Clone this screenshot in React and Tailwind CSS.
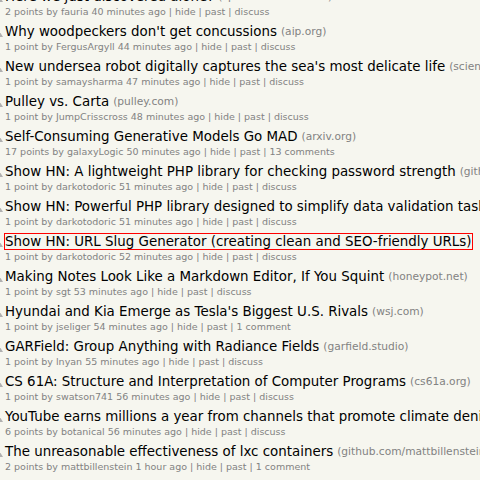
import React from "react";

const stories = [
  {
    title: "Here we just discovered alone?",
    site: "spectatorctech.com",
    sub: "2 points by fauria 40 minutes ago",
    end: "discuss",
  },
  {
    title: "Why woodpeckers don't get concussions",
    site: "aip.org",
    sub: "1 point by FergusArgyll 44 minutes ago",
    end: "discuss",
  },
  {
    title: "New undersea robot digitally captures the sea's most delicate life",
    site: "science.org",
    sub: "1 point by samaysharma 47 minutes ago",
    end: "discuss",
  },
  {
    title: "Pulley vs. Carta",
    site: "pulley.com",
    sub: "1 point by JumpCrisscross 48 minutes ago",
    end: "discuss",
  },
  {
    title: "Self-Consuming Generative Models Go MAD",
    site: "arxiv.org",
    sub: "17 points by galaxyLogic 50 minutes ago",
    end: "13 comments",
  },
  {
    title: "Show HN: A lightweight PHP library for checking password strength",
    site: "github.com/darkotodoric",
    sub: "1 point by darkotodoric 51 minutes ago",
    end: "discuss",
  },
  {
    title: "Show HN: Powerful PHP library designed to simplify data validation tasks",
    site: "github.com/darkotodoric",
    sub: "1 point by darkotodoric 51 minutes ago",
    end: "discuss",
  },
  {
    title: "Show HN: URL Slug Generator (creating clean and SEO-friendly URLs)",
    site: "",
    sub: "1 point by darkotodoric 52 minutes ago",
    end: "discuss",
    focused: true,
  },
  {
    title: "Making Notes Look Like a Markdown Editor, If You Squint",
    site: "honeypot.net",
    sub: "1 point by sgt 53 minutes ago",
    end: "discuss",
  },
  {
    title: "Hyundai and Kia Emerge as Tesla's Biggest U.S. Rivals",
    site: "wsj.com",
    sub: "1 point by jseliger 54 minutes ago",
    end: "1 comment",
  },
  {
    title: "GARField: Group Anything with Radiance Fields",
    site: "garfield.studio",
    sub: "1 point by lnyan 55 minutes ago",
    end: "discuss",
  },
  {
    title: "CS 61A: Structure and Interpretation of Computer Programs",
    site: "cs61a.org",
    sub: "1 point by swatson741 56 minutes ago",
    end: "discuss",
  },
  {
    title: "YouTube earns millions a year from channels that promote climate denial",
    site: "theguardian.com",
    sub: "6 points by botanical 56 minutes ago",
    end: "discuss",
  },
  {
    title: "The unreasonable effectiveness of lxc containers",
    site: "github.com/mattbillenstein",
    sub: "2 points by mattbillenstein 1 hour ago",
    end: "1 comment",
  },
];

// HN up-vote arrow, mostly scrolled off to the left
function VoteArrow() {
  return (
    <svg width="10" height="10" viewBox="0 0 10 10" className="ml-[-7px] mr-[2px] mt-[5px] shrink-0">
      <polygon points="5,1 10,9 0,9" fill="#b0b0b0" />
    </svg>
  );
}

export default function App() {
  return (
    <div
      className="w-[480px] h-[480px] overflow-hidden bg-[#f6f6ef] text-black"
      style={{ fontFamily: '"DejaVu Sans", Verdana, sans-serif' }}
    >
      <div className="mt-[-12px] whitespace-nowrap">
        {stories.map((s, i) => (
          <div key={i} className="h-[35px]">
            <div className="flex items-start h-[17px]">
              <VoteArrow />
              <span className="text-[13.4px] leading-[17px]">
                <span
                  className={
                    s.focused ? "outline-solid outline-1 outline-[color:#ff0000]" : ""
                  }
                >
                  {s.title}
                </span>
              </span>
              {s.site && (
                <span className="text-[10.67px] leading-[17px] text-[#828282] ml-[4px]">
                  ({s.site})
                </span>
              )}
            </div>
            <div className="text-[9.5px] leading-[13px] text-[#828282] pl-[5px]">
              {s.sub} | hide | past | {s.end}
            </div>
          </div>
        ))}
      </div>
    </div>
  );
}
